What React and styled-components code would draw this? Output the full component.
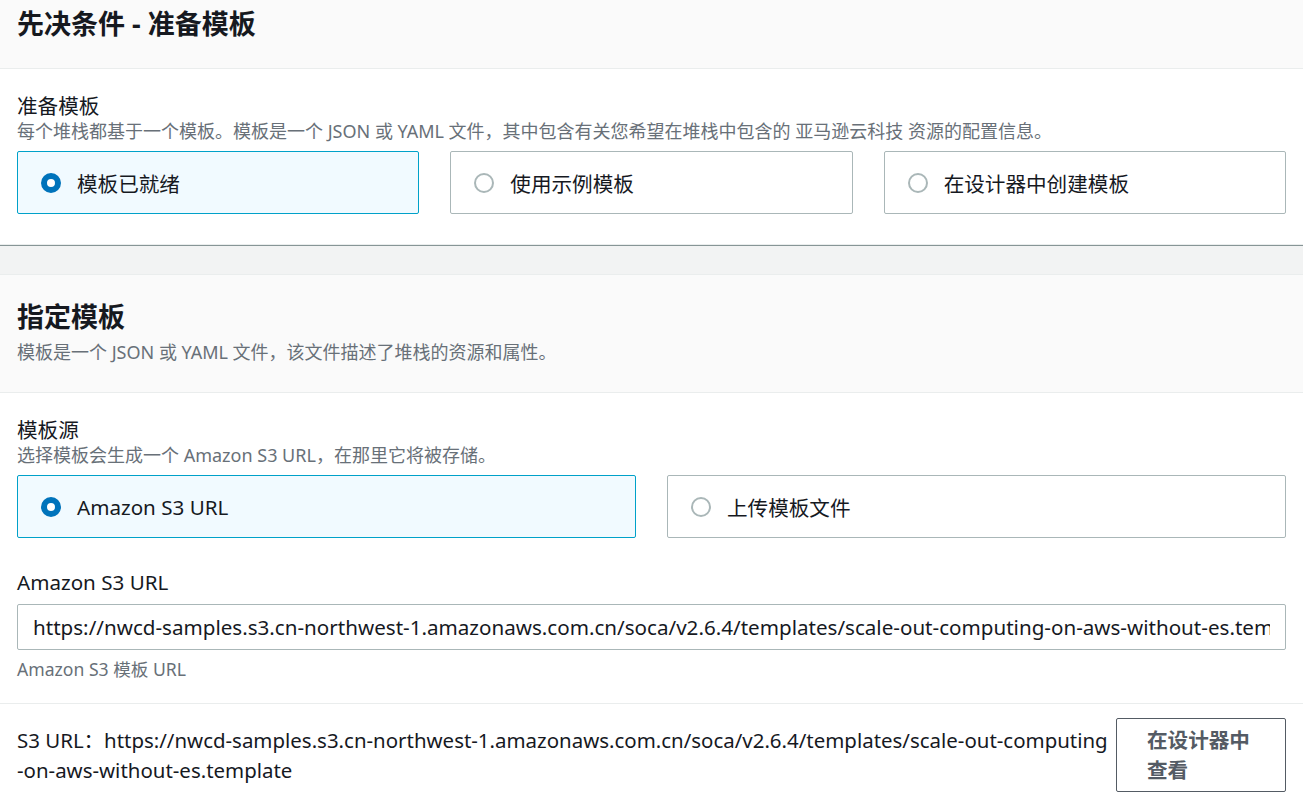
import React from 'react';
import styled, { createGlobalStyle } from 'styled-components';

const GlobalStyle = createGlobalStyle`
  body {
    margin: 0;
    background: #f2f3f3;
    font-family: "Noto Sans", "Noto Sans CJK SC", sans-serif;
    color: #16191f;
  }
`;

const S3_URL = 'https://nwcd-samples.s3.cn-northwest-1.amazonaws.com.cn/soca/v2.6.4/templates/scale-out-computing-on-aws-without-es.template';

export default class App extends React.Component {

  constructor(props) {
    super(props);

    this.state = {
      prepare: 'ready',
      source: 's3',
    };
  }

  render() {
    const { prepare, source } = this.state;
    return (
      <Page>
        <GlobalStyle />

        <Container>
          <Header first>
            <Title>先决条件 - 准备模板</Title>
          </Header>
          <Body>
            <Label>准备模板</Label>
            <Description>每个堆栈都基于一个模板。模板是一个 JSON 或 YAML 文件，其中包含有关您希望在堆栈中包含的 亚马逊云科技 资源的配置信息。</Description>
            <Tiles cols={3}>
              <Tile selected={prepare === 'ready'} onClick={() => this.setState({prepare: 'ready'})}>
                <Radio selected={prepare === 'ready'} /> 模板已就绪
              </Tile>
              <Tile selected={prepare === 'sample'} onClick={() => this.setState({prepare: 'sample'})}>
                <Radio selected={prepare === 'sample'} /> 使用示例模板
              </Tile>
              <Tile selected={prepare === 'designer'} onClick={() => this.setState({prepare: 'designer'})}>
                <Radio selected={prepare === 'designer'} /> 在设计器中创建模板
              </Tile>
            </Tiles>
          </Body>
        </Container>

        <Container>
          <Header>
            <Title>指定模板</Title>
            <HeaderDescription>模板是一个 JSON 或 YAML 文件，该文件描述了堆栈的资源和属性。</HeaderDescription>
          </Header>
          <Body>
            <Label>模板源</Label>
            <Description>选择模板会生成一个 Amazon S3 URL，在那里它将被存储。</Description>
            <Tiles cols={2}>
              <Tile selected={source === 's3'} onClick={() => this.setState({source: 's3'})}>
                <Radio selected={source === 's3'} /> Amazon S3 URL
              </Tile>
              <Tile selected={source === 'upload'} onClick={() => this.setState({source: 'upload'})}>
                <Radio selected={source === 'upload'} /> 上传模板文件
              </Tile>
            </Tiles>

            <Field>
              <Label>Amazon S3 URL</Label>
              <Input defaultValue={S3_URL} spellCheck={false} />
              <Help>Amazon S3 模板 URL</Help>
            </Field>
          </Body>
          <Footer>
            <UrlText>S3 URL：{S3_URL}</UrlText>
            <Button>在设计器中查看</Button>
          </Footer>
        </Container>
      </Page>
    );
  }

}

const Page = styled.div`
  display: flex;
  flex-direction: column;
  gap: 30px;
  min-height: 100vh;
`;

const Container = styled.section`
  background: #ffffff;
  border-top: 1px solid #eaeded;
  box-shadow: 0 1px 0 0 #eaeded, 0 2px 0 0 #879596;
  &:first-child { border-top: none; }
`;

const Header = styled.div`
  background: #fafafa;
  border-bottom: 1px solid #eaeded;
  padding: ${p => p.first ? '7px 17px 27px' : '25px 17px 28px'};
`;

const Title = styled.h2`
  margin: 0;
  font-size: 27px;
  line-height: 34px;
  font-weight: 700;
  color: #16191f;
`;

const HeaderDescription = styled.div`
  margin-top: 6px;
  font-size: 18px;
  line-height: 24px;
  color: #687078;
`;

const Body = styled.div`
  padding: 24px 17px 30px;
`;

const Label = styled.div`
  font-size: 20.6px;
  line-height: 26px;
  color: #16191f;
`;

const Description = styled.div`
  font-size: 18px;
  line-height: 24px;
  color: #687078;
`;

const Tiles = styled.div`
  display: grid;
  grid-template-columns: repeat(${p => p.cols}, 1fr);
  column-gap: 31px;
  margin-top: 8px;
`;

const Tile = styled.div`
  display: flex;
  align-items: center;
  gap: 16px;
  height: 63px;
  box-sizing: border-box;
  padding: 0 23px;
  border: 1px solid ${p => p.selected ? '#00a1c9' : '#aab7b8'};
  border-radius: 2px;
  background: ${p => p.selected ? '#f1faff' : '#ffffff'};
  font-size: 20.6px;
  color: #16191f;
  cursor: pointer;
`;

const Radio = styled.span`
  flex: none;
  width: 20px;
  height: 20px;
  box-sizing: border-box;
  border-radius: 50%;
  background: #ffffff;
  border: ${p => p.selected ? '6px solid #0073bb' : '2px solid #aab7b8'};
`;

const Field = styled.div`
  margin-top: 31px;
`;

const Input = styled.input`
  display: block;
  width: 100%;
  box-sizing: border-box;
  height: 46px;
  margin-top: 9px;
  padding: 0 15px;
  border: 1px solid #aab7b8;
  border-radius: 2px;
  font-family: inherit;
  font-size: 20.6px;
  color: #16191f;
  outline: none;
`;

const Help = styled.div`
  margin-top: 7px;
  font-size: 17.6px;
  line-height: 24px;
  color: #687078;
`;

const Footer = styled.div`
  display: flex;
  align-items: center;
  gap: 5px;
  border-top: 1px solid #eaeded;
  padding: 14px 17px 10px;
  margin-top: -8px;
`;

const UrlText = styled.div`
  flex: 1;
  font-size: 20.45px;
  line-height: 30px;
  color: #16191f;
  word-break: break-all;
`;

const Button = styled.button`
  flex: none;
  width: 170px;
  box-sizing: border-box;
  padding: 6px 30px;
  text-align: left;
  background: #ffffff;
  border: 1px solid #545b64;
  border-radius: 2px;
  font-family: inherit;
  font-size: 20.6px;
  line-height: 30px;
  font-weight: 700;
  color: #545b64;
  cursor: pointer;
`;
